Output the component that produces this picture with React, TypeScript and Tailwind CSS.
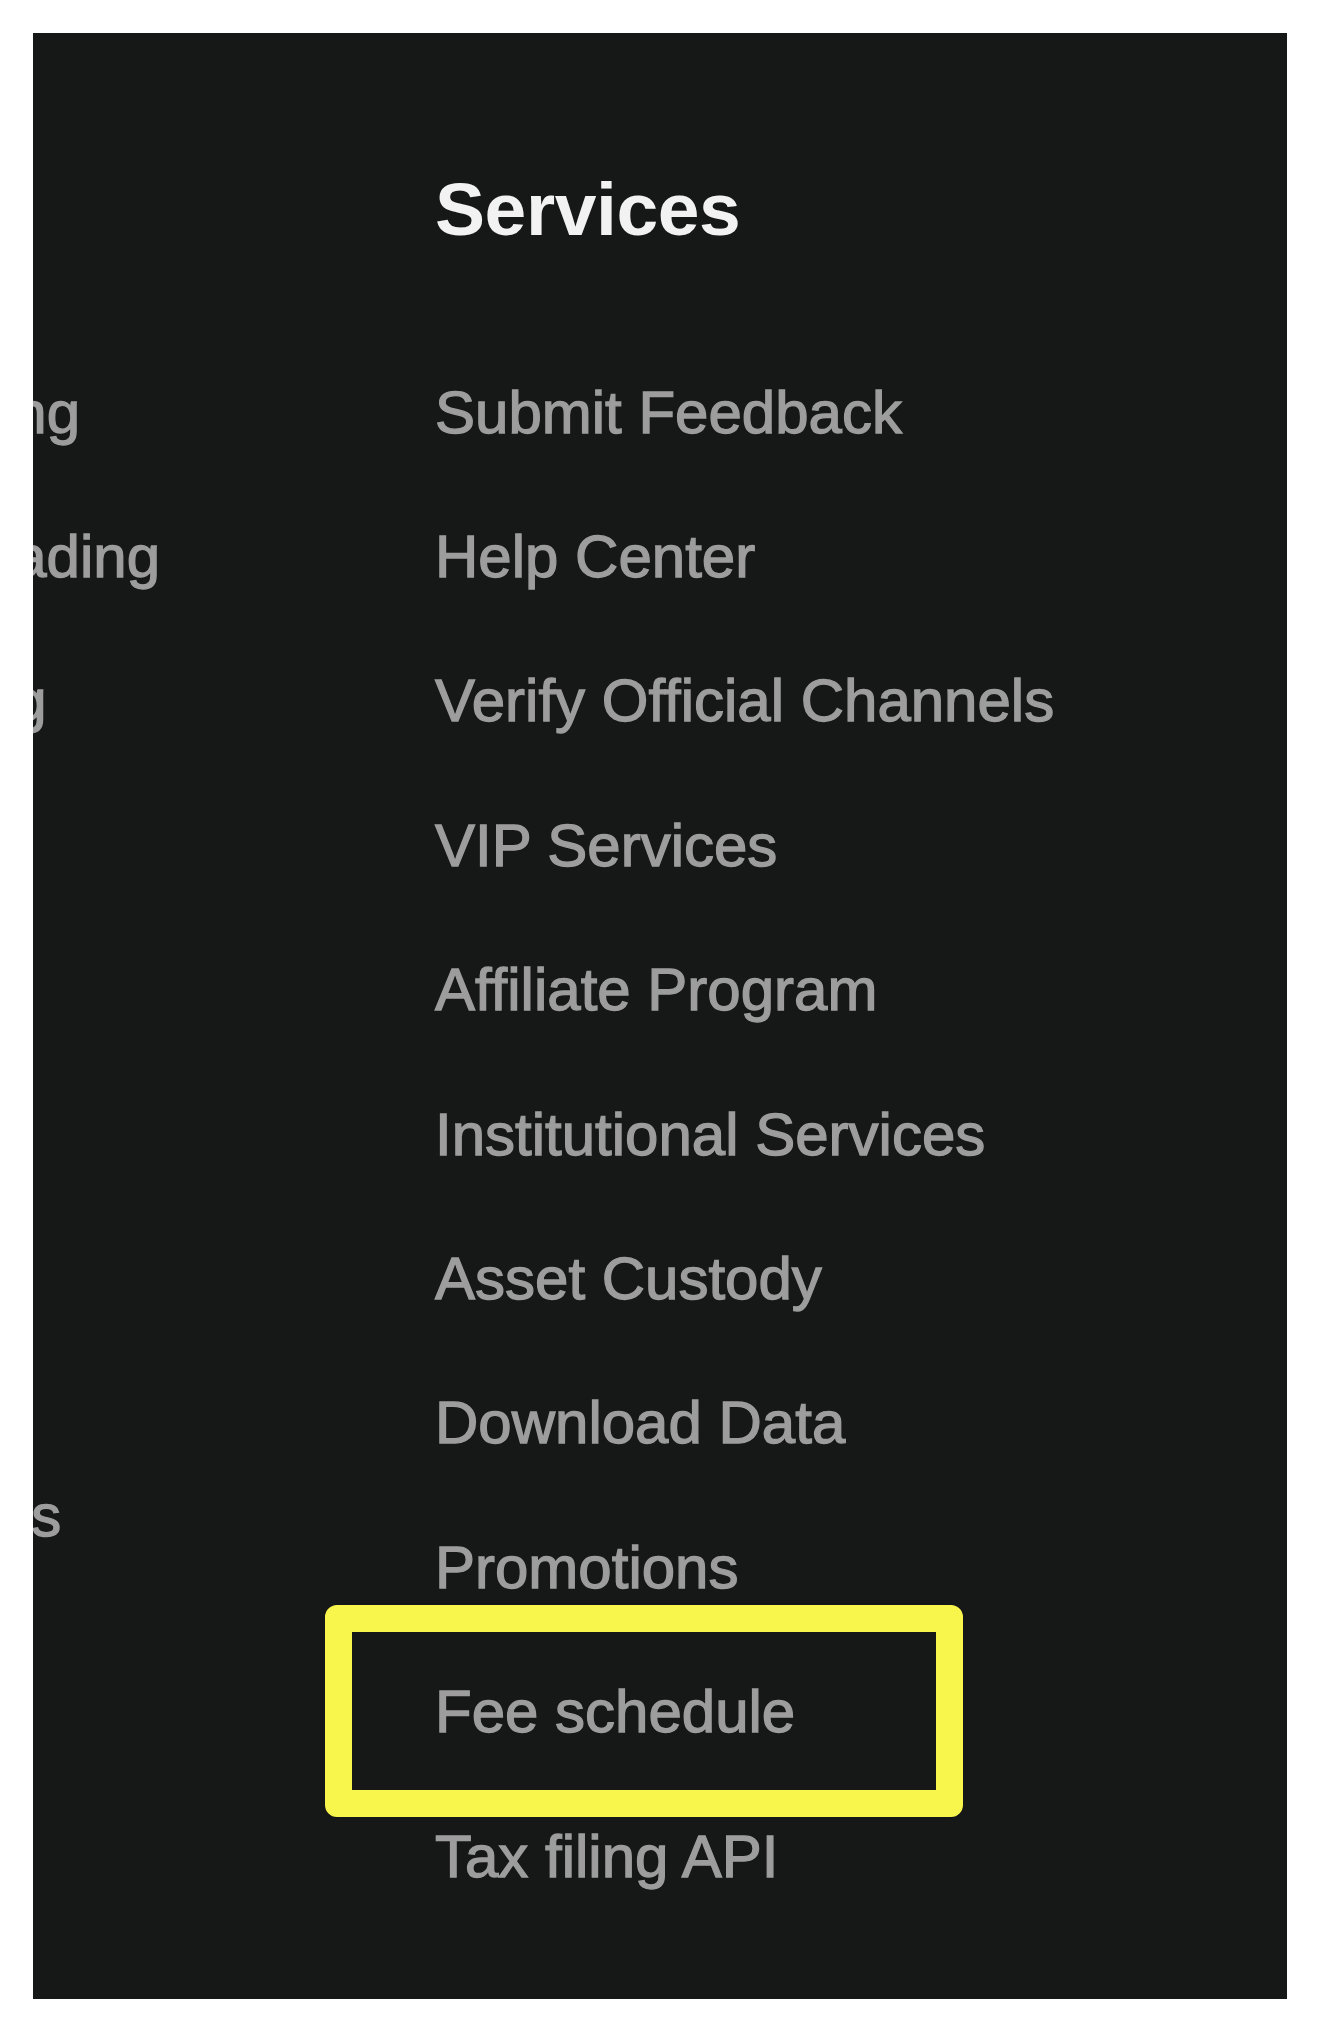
import React from "react";

const services = [
  "Submit Feedback",
  "Help Center",
  "Verify Official Channels",
  "VIP Services",
  "Affiliate Program",
  "Institutional Services",
  "Asset Custody",
  "Download Data",
  "Promotions",
  "Fee schedule",
  "Tax filing API",
];

const products = ["Spot trading", "Futures trading", "Bot trading", "Earn", "Grid", "Swap", "Loans"];

export default function App() {
  return (
    <div
      className="min-h-[2035px] w-[1320px] bg-white pt-[33px] pl-[33px] pr-[33px]"
      style={{ fontFamily: '"Liberation Sans", Arial, sans-serif' }}
    >
      <div className="flex h-[1966px] w-[1254px] overflow-hidden bg-[#161717]">
        {/* Products column, clipped by the panel's left edge */}
        <div className="ml-[-276.5px] w-[678.5px] shrink-0 pt-[307.6px]">
          {products.map((p) => (
            <div
              key={p}
              className="whitespace-nowrap text-[60px] leading-[144.4px] text-[#9d9d9d] [-webkit-text-stroke:1.3px_#9d9d9d]"
            >
              {p}
            </div>
          ))}
          <div className="mt-[92.6px] whitespace-nowrap text-[60px] leading-[144.4px] tracking-[-0.6px] text-[#9d9d9d] [-webkit-text-stroke:1.3px_#9d9d9d]">
            Swap pools
          </div>
        </div>

        {/* Services column */}
        <div className="shrink-0 pt-[138.5px]">
          <h2 className="text-[75px] font-bold leading-[75px] tracking-[-0.4px] text-[#f2f2f2]">Services</h2>
          <ul className="mt-[94.1px]">
            {services.map((s) => (
              <li
                key={s}
                className="relative whitespace-nowrap text-[60px] leading-[144.4px] text-[#9d9d9d] [-webkit-text-stroke:1.3px_#9d9d9d]"
              >
                {s}
                {s === "Fee schedule" && (
                  <span className="pointer-events-none absolute left-[-110.5px] top-[-35px] h-[212px] w-[638.5px] rounded-[12px] border-[27px] border-[#f8f64d]" />
                )}
              </li>
            ))}
          </ul>
        </div>
      </div>
    </div>
  );
}
